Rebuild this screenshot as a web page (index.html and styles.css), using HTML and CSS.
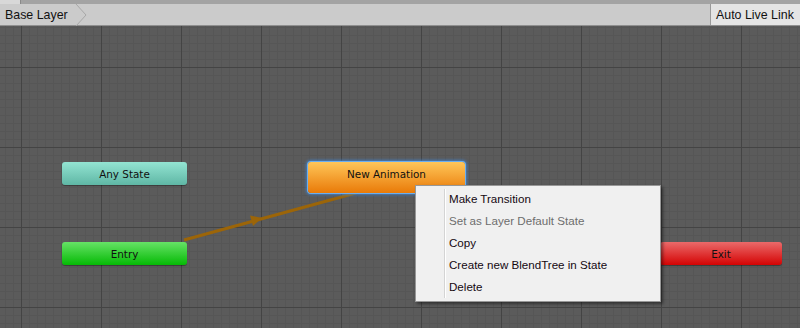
FILE: index.html
```html
<!DOCTYPE html>
<html>
<head>
<meta charset="utf-8">
<link rel="stylesheet" href="styles.css">
</head>
<body>
<div class="window">
  <div class="topstrip"><div class="toptab"></div></div>
  <div class="toolbar">
    <div class="crumb">Base Layer
      <svg class="chev" width="14" height="22" viewBox="0 0 14 22"><path d="M1 0 L11 11 L1 22" fill="none" stroke="#a8a8a8" stroke-width="1"/></svg>
    </div>
    <div class="spacer"></div>
    <div class="livelink">Auto Live Link</div>
  </div>
  <div class="canvas">
    <svg class="links" width="800" height="302" viewBox="0 0 800 302">
      <line x1="184" y1="214" x2="356" y2="167" stroke="#9c6508" stroke-width="3"/>
      <polygon points="262,192 250,189.5 253,200" fill="#9c6508"/>
    </svg>
    <div class="node any">Any State</div>
    <div class="node entry">Entry</div>
    <div class="node anim">New Animation</div>
    <div class="node exit">Exit</div>
    <div class="menu">
      <div class="sep"></div>
      <div class="item">Make Transition</div>
      <div class="item disabled">Set as Layer Default State</div>
      <div class="item">Copy</div>
      <div class="item">Create new BlendTree in State</div>
      <div class="item">Delete</div>
    </div>
  </div>
</div>
</body>
</html>
```

FILE: styles.css
```css
html, body {
  margin: 0;
  padding: 0;
  width: 800px;
  height: 328px;
  overflow: hidden;
  background: #595959;
}
.window {
  width: 800px;
  height: 328px;
  display: flex;
  flex-direction: column;
  font-family: "DejaVu Sans", "Liberation Sans", sans-serif;
}
.topstrip {
  height: 4px;
  background: #a3a3a3;
  flex: none;
}
.toptab {
  width: 20px;
  height: 4px;
  background: #d8d8d8;
  border-right: 1px solid #8a8a8a;
}
.toolbar {
  height: 21px;
  background: #cbcbcb;
  border-bottom: 1px solid #8f8f8f;
  display: flex;
  align-items: stretch;
  flex: none;
  font-family: "Liberation Sans", "DejaVu Sans", sans-serif;
  font-size: 12.4px;
  color: #111;
  white-space: nowrap;
}
.crumb {
  display: flex;
  align-items: center;
  padding-left: 5px;
  gap: 7px;
}
.chev {
  display: block;
}
.spacer { flex: 1; }
.livelink {
  background: #e4e4e4;
  border-left: 1px solid #9a9a9a;
  padding: 0 0 0 5px;
  display: flex;
  align-items: center;
  width: 84px;
  white-space: nowrap;
}
.canvas {
  position: relative;
  flex: 1;
  background-color: #5b5b5b;
  background-image:
    linear-gradient(to right, #444444 1px, transparent 1px),
    linear-gradient(to bottom, #444444 1px, transparent 1px),
    linear-gradient(to right, #565656 1px, transparent 1px),
    linear-gradient(to bottom, #565656 1px, transparent 1px);
  background-size: 80px 80px, 80px 80px, 8px 8px, 8px 8px;
  background-position: 21px 41px, 21px 41px, 5px 1px, 5px 1px;
  overflow: hidden;
}
.links {
  position: absolute;
  left: 0;
  top: 0;
}
.node {
  position: absolute;
  height: 23px;
  width: 125px;
  border-radius: 3px;
  display: flex;
  align-items: center;
  justify-content: center;
  font-size: 10.4px;
  color: #111;
  font-family: "DejaVu Sans", sans-serif;
  box-shadow: 0 1px 1px rgba(0,0,0,0.35);
}
.any {
  left: 62px;
  top: 136px;
  background: linear-gradient(#93e4d2, #5fb7a5);
}
.entry {
  left: 62px;
  top: 216px;
  background: linear-gradient(#66e266, #05ba05);
}
.exit {
  left: 660px;
  top: 216px;
  width: 122px;
  background: linear-gradient(#eb6a6a, #d40303);
}
.anim {
  left: 308px;
  top: 136px;
  width: 157px;
  height: 31px;
  box-sizing: border-box;
  padding-bottom: 8px;
  background: linear-gradient(#ffc659, #e97a08);
  box-shadow: 0 0 0 1px #6aaef0, 0 0 3px 2px rgba(60,140,230,0.7);
}
.menu {
  position: absolute;
  left: 415px;
  top: 159px;
  width: 244px;
  padding: 2px 0 3px;
  background: #f0f0f0;
  border: 1px solid #979797;
  box-shadow: 2px 2px 3px rgba(0,0,0,0.45);
  font-family: "Liberation Sans", "DejaVu Sans", sans-serif;
  font-size: 11.6px;
  color: #140810;
  display: flex;
  flex-direction: column;
}
.sep {
  position: absolute;
  left: 28px;
  top: 3px;
  bottom: 3px;
  width: 1px;
  background: #d4d4d4;
  border-right: 1px solid #fff;
}
.item {
  height: 22px;
  line-height: 22px;
  padding-left: 33px;
}
.item.disabled {
  color: #6d6d6d;
}
```
